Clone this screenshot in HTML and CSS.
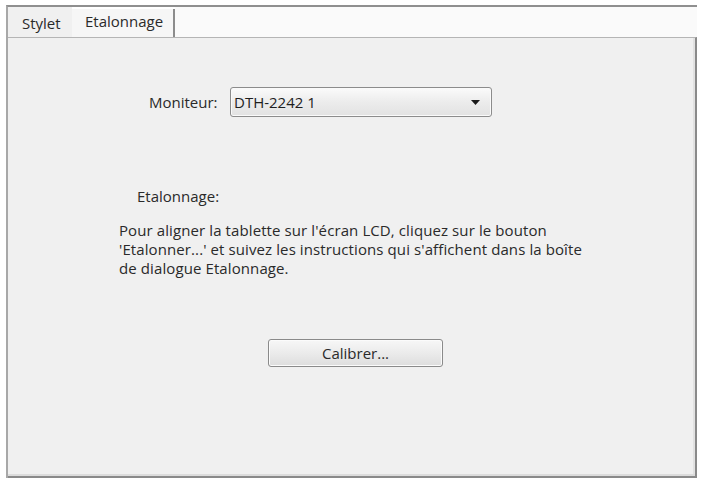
FILE: index.html
```html
<!DOCTYPE html>
<html lang="fr">
<head>
<meta charset="utf-8">
<title>Etalonnage</title>
<link rel="stylesheet" href="styles.css">
</head>
<body>
<div class="window">
  <div class="tabs">
    <div class="tab">Stylet</div>
    <div class="tab tab-active">Etalonnage</div>
    <div class="tab-fill"></div>
  </div>
  <div class="panel">
    <div class="monitor-row">
      <span class="monitor-label">Moniteur:</span>
      <div class="select">
        <span class="select-value">DTH-2242 1</span>
        <svg class="select-arrow" width="9" height="5" viewBox="0 0 9 5"><path d="M0 0H9L4.5 5Z" fill="#1a1a1a"/></svg>
      </div>
    </div>
    <div class="section-title">Etalonnage:</div>
    <p class="desc">Pour aligner la tablette sur l'écran LCD, cliquez sur le bouton<br>'Etalonner...' et suivez les instructions qui s'affichent dans la boîte<br>de dialogue Etalonnage.</p>
    <div class="btn-row">
      <button class="btn">Calibrer...</button>
    </div>
  </div>
</div>
</body>
</html>
```
FILE: styles.css
```css
html, body {
  margin: 0;
  padding: 0;
  background: #ffffff;
}
body {
  font-family: "Open Sans", "Noto Sans", sans-serif;
  font-size: 15px;
  line-height: 19px;
  color: #2a2a2a;
}
.window {
  margin: 5px 0 0 6px;
  width: 691px;
  height: 473px;
  box-sizing: border-box;
  border-top: 2px solid #8f8f8f;
  border-left: 2px solid #a8a8a8;
  background: #f0f0f0;
  display: flex;
  flex-direction: column;
}
.tabs {
  display: flex;
  height: 30px;
  background: #ffffff;
  flex: none;
}
.tab {
  display: flex;
  align-items: center;
  box-sizing: border-box;
  height: 30px;
}
.tab:first-child {
  width: 64px;
  padding: 2px 0 0 14px;
  background: #f0f0f0;
}
.tab-active {
  width: 103px;
  padding: 3px 0 0 13px;
  align-items: flex-start;
  background: #f6f6f6;
  border-right: 2px solid #8c8c8c;
  margin-top: 2px;
  height: 28px;
}
.tab-fill {
  flex: 1;
  background: #fafafa;
}
.panel {
  flex: 1;
  border-top: 1px solid #b5b5b5;
  border-right: 2px solid #8a8a8a;
  border-bottom: 2px solid #8a8a8a;
  background: #f0f0f0;
  box-shadow: inset 0 -2px 0 #dcdcdc, inset -2px 0 0 #e2e2e2;
  display: flex;
  flex-direction: column;
  padding-left: 111px;
}
.monitor-row {
  display: flex;
  align-items: center;
  margin-top: 49px;
  padding-left: 30px;
}
.monitor-label {
  width: 81px;
}
.select {
  width: 262px;
  height: 30px;
  box-sizing: border-box;
  border: 1px solid #8c8c8c;
  border-radius: 3px;
  background: linear-gradient(#fbfbfb, #ececec 50%, #e2e2e2);
  box-shadow: inset 0 0 0 1px #fafafa;
  display: flex;
  align-items: center;
  justify-content: space-between;
  padding: 0 11px 0 3px;
  color: #1e1e1e;
}
.section-title {
  margin-top: 70px;
  padding-left: 18px;
}
.desc {
  margin: 15px 0 0 0;
  letter-spacing: 0.1px;
}
.btn-row {
  margin-top: 61px;
  padding-left: 149px;
}
.btn {
  width: 175px;
  height: 28px;
  border: 1px solid #8a8a8a;
  border-radius: 3px;
  background: linear-gradient(#f7f7f7, #ebebeb 50%, #dddddd);
  box-shadow: inset 0 0 0 1px #fbfbfb;
  font-family: inherit;
  font-size: 15px;
  color: #2a2a2a;
  padding: 0;
}
```
